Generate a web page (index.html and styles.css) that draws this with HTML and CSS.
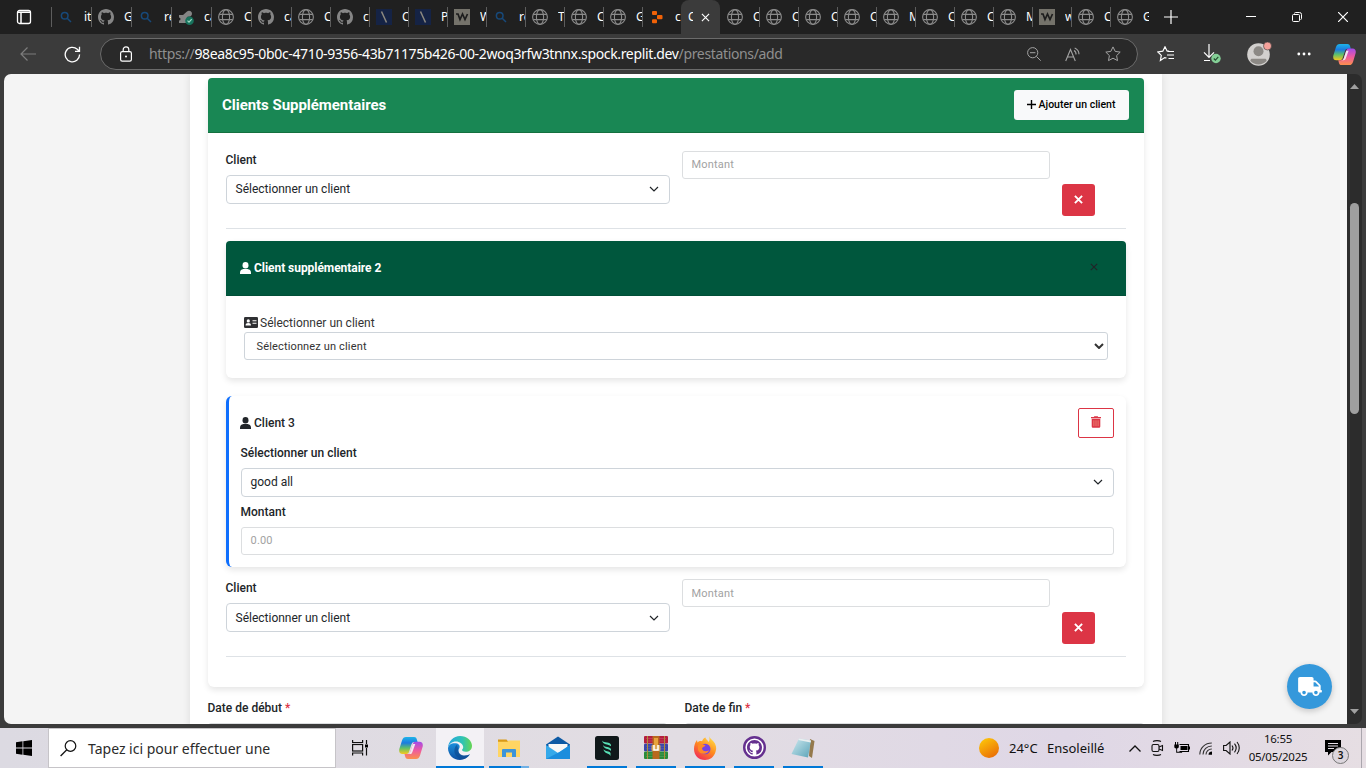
FILE: index.html
```html
<!DOCTYPE html>
<html lang="fr">
<head>
<meta charset="utf-8">
<title>Prestations</title>
<link rel="stylesheet" href="styles.css">
</head>
<body>
<svg class="defs" width="0" height="0">
  <defs>
    <linearGradient id="cpA" x1="0" y1="0" x2="0" y2="1"><stop offset="0" stop-color="#1db4e8"/><stop offset=".35" stop-color="#1c7be0"/><stop offset=".65" stop-color="#5ec06a"/><stop offset="1" stop-color="#f8c81c"/></linearGradient>
    <linearGradient id="cpB" x1="0" y1="0" x2="0" y2="1"><stop offset="0" stop-color="#a44be8"/><stop offset=".5" stop-color="#ee5aa0"/><stop offset="1" stop-color="#fb8f4c"/></linearGradient>
    <linearGradient id="edA" x1="0" y1="0" x2="1" y2="0"><stop offset="0" stop-color="#27a5e0"/><stop offset=".6" stop-color="#2fc3b4"/><stop offset="1" stop-color="#66d552"/></linearGradient>
    <linearGradient id="edB" x1="0" y1="0" x2="0" y2="1"><stop offset="0" stop-color="#1b8fdc"/><stop offset="1" stop-color="#0f4fa0"/></linearGradient>
    <linearGradient id="ffA" x1=".8" y1="0" x2=".2" y2="1"><stop offset="0" stop-color="#ffe14a"/><stop offset=".5" stop-color="#ff8a1e"/><stop offset="1" stop-color="#f0245c"/></linearGradient>
    <linearGradient id="sunG" x1=".2" y1="0" x2=".8" y2="1"><stop offset="0" stop-color="#fdc60a"/><stop offset="1" stop-color="#e96a06"/></linearGradient>
    <linearGradient id="npG" x1="0" y1="0" x2="1" y2="1"><stop offset="0" stop-color="#cfeaf0"/><stop offset="1" stop-color="#5aa3b8"/></linearGradient>
    <symbol id="globe" viewBox="0 0 16 16"><g fill="none" stroke="#8b8b8b" stroke-width="1.1"><circle cx="8" cy="8" r="7.4"/><ellipse cx="8" cy="8" rx="3.6" ry="7.4"/><path d="M1.2 5.4h13.6M1.2 10.6h13.6"/></g></symbol>
    <symbol id="gh" viewBox="0 0 16 16"><path fill="currentColor" d="M8 0C3.58 0 0 3.58 0 8c0 3.54 2.29 6.53 5.47 7.59.4.07.55-.17.55-.38 0-.19-.01-.82-.01-1.49-2.01.37-2.53-.49-2.69-.94-.09-.23-.48-.94-.82-1.13-.28-.15-.68-.52-.01-.53.63-.01 1.08.58 1.23.82.72 1.21 1.87.87 2.33.66.07-.52.28-.87.51-1.07-1.78-.2-3.64-.89-3.64-3.95 0-.87.31-1.59.82-2.15-.08-.2-.36-1.02.08-2.12 0 0 .67-.21 2.2.82.64-.18 1.32-.27 2-.27s1.36.09 2 .27c1.53-1.04 2.2-.82 2.2-.82.44 1.1.16 1.92.08 2.12.51.56.82 1.27.82 2.15 0 3.07-1.87 3.75-3.65 3.95.29.25.54.73.54 1.48 0 1.07-.01 1.93-.01 2.2 0 .21.15.46.55.38A8.01 8.01 0 0016 8c0-4.42-3.58-8-8-8z"/></symbol>
    <symbol id="lens" viewBox="0 0 16 16"><g fill="none" stroke="#17497a" stroke-width="1.5"><circle cx="6.700" cy="6.700" r="3.300"/><path d="M9.200 9.200L13 13"/></g></symbol>
    <symbol id="slash" viewBox="0 0 16 16"><rect width="16" height="16" fill="#152345"/><path d="M5.500 2.500L10.500 13.500" stroke="#8d8a80" stroke-width="1.500"/></symbol>
    <symbol id="wave" viewBox="0 0 16 16"><rect width="16" height="16" fill="#75736b"/><path d="M2 5h2l2 5.500L8.500 5l2.500 5.500L13.500 5" fill="none" stroke="#1d1d1d" stroke-width="1.700"/></symbol>
    <symbol id="check" viewBox="0 0 16 16"><path fill="#868686" d="M1 6h4l4-3.500a3 3 0 0 1 5 2.500 3 3 0 0 1-4 2.500l-1 1V14H1v-2.500a1.500 1.500 0 0 0 0-3z"/><circle cx="11.500" cy="11.700" r="4.300" fill="#17725c"/><path d="M9.500 11.700l1.500 1.500 2.700-3" fill="none" stroke="#9fd8c4" stroke-width="1.200"/></symbol>
    <symbol id="replit" viewBox="0 0 16 16"><g fill="#f26207"><rect x="3" y="2" width="5" height="4" rx="1"/><rect x="8" y="6" width="5.500" height="4.300" rx="1"/><rect x="3" y="10.300" width="5" height="4" rx="1"/></g></symbol>
    <symbol id="user" viewBox="0 0 11 12"><g fill="currentColor"><ellipse cx="5.500" cy="3.200" rx="3" ry="3.200"/><path d="M0 12v-1.400C0 8.500 1.500 7.300 3.300 7h4.400C9.500 7.300 11 8.500 11 10.600V12z"/></g></symbol>
    <symbol id="cross" viewBox="0 0 8 8"><path d="M.8.8l6.400 6.400M7.200.8L.8 7.200" stroke="currentColor" fill="none"/></symbol>
    <symbol id="chev" viewBox="0 0 10 6"><path d="M1 1l4 4 4-4" stroke="currentColor" fill="none"/></symbol>
    <symbol id="copilot" viewBox="0 0 24 22"><path fill="url(#cpA)" d="M7 0h8c2 0 2.500 1 3 3l.6 2h-3c-1.800 0-2.600.8-3.200 2.600L10 15c-.6 1.600-1.500 2-3 2H3.500C.8 17-.3 15 .3 12L3 3.500C3.800 1 5 0 7 0z"/><path fill="url(#cpB)" d="M17 22H9c-1.800 0-2.600-1-3-3l-.5-2h2.300c2 0 3-.8 3.600-2.600L13.800 7c.6-1.600 1.400-2.200 3-2.200h3.700c2.700 0 3.700 2 3.200 4.600L21 18.500c-.8 2.500-2 3.500-4 3.500z"/><path fill="#f3e6ef" d="M13.800 7h2.500l-3 8.200c-.5 1.300-1 1.800-2.200 1.800h-2c1.200-.4 1.800-1 2.300-2.600z"/></symbol>
  </defs>
</svg>

<div class="tabbar">
  <div class="workspace"><svg width="16" height="16" viewBox="0 0 16 16"><rect x="1.500" y="1.500" width="13" height="13" rx="2" fill="none" stroke="#fff" stroke-width="1.300"/><path d="M1.500 3.200h13M5 4v10.500" stroke="#fff" stroke-width="1.500"/></svg></div>
  <div class="tab wide"><svg><use href="#lens"/></svg><span>it</span></div>
  <div class="tab wide"><svg><use href="#gh"/></svg><span>G</span></div>
  <div class="tab wide"><svg><use href="#lens"/></svg><span>re</span></div>
  <div class="tab wide"><svg><use href="#check"/></svg><span>ca</span></div>
  <div class="tab wide"><svg><use href="#globe"/></svg><span>C</span></div>
  <div class="tab wide"><svg><use href="#gh"/></svg><span>ca</span></div>
  <div class="tab"><svg><use href="#globe"/></svg><span>C</span></div>
  <div class="tab"><svg><use href="#gh"/></svg><span>c</span></div>
  <div class="tab"><svg><use href="#slash"/></svg><span>C</span></div>
  <div class="tab"><svg><use href="#slash"/></svg><span>P</span></div>
  <div class="tab"><svg><use href="#wave"/></svg><span>W</span></div>
  <div class="tab"><svg><use href="#lens"/></svg><span>re</span></div>
  <div class="tab"><svg><use href="#globe"/></svg><span>T</span></div>
  <div class="tab"><svg><use href="#globe"/></svg><span>C</span></div>
  <div class="tab"><svg><use href="#globe"/></svg><span>G</span></div>
  <div class="tab"><svg><use href="#replit"/></svg><span>c</span></div>
  <div class="tab active"><span>C</span><svg class="close"><use href="#cross"/></svg></div>
  <div class="tab plain"><svg><use href="#globe"/></svg><span>C</span></div>
  <div class="tab"><svg><use href="#globe"/></svg><span>C</span></div>
  <div class="tab"><svg><use href="#globe"/></svg><span>C</span></div>
  <div class="tab"><svg><use href="#globe"/></svg><span>C</span></div>
  <div class="tab"><svg><use href="#globe"/></svg><span>M</span></div>
  <div class="tab"><svg><use href="#globe"/></svg><span>C</span></div>
  <div class="tab"><svg><use href="#globe"/></svg><span>C</span></div>
  <div class="tab"><svg><use href="#globe"/></svg><span>M</span></div>
  <div class="tab"><svg><use href="#wave"/></svg><span>w</span></div>
  <div class="tab"><svg><use href="#globe"/></svg><span>C</span></div>
  <div class="tab"><svg><use href="#globe"/></svg><span>G</span></div>
  <div class="newtab"><svg width="14" height="14" viewBox="0 0 14 14"><path d="M7 0v14M0 7h14" stroke="#fff" stroke-width="1.200"/></svg></div>
  <div class="winbtns">
    <svg width="10" height="10" viewBox="0 0 10 10"><path d="M0 4.500h10" stroke="#fff"/></svg>
    <svg width="10" height="10" viewBox="0 0 10 10"><g fill="none" stroke="#fff"><rect x=".5" y="2.500" width="7" height="7" rx="1"/><path d="M2.500 1.500a1 1 0 0 1 1-1h4a2 2 0 0 1 2 2v4a1 1 0 0 1-1 1"/></g></svg>
    <svg width="10" height="10" viewBox="0 0 10 10"><path d="M0 0l10 10M10 0L0 10" stroke="#fff" stroke-width="1.200"/></svg>
  </div>
</div>

<div class="toolbar">
  <svg class="back" width="16" height="14" viewBox="0 0 16 14"><path d="M16 7H1M7.500.5L1 7l6.500 6.500" fill="none" stroke="#7d7d7d" stroke-width="1.200"/></svg>
  <svg class="reload" width="17" height="17" viewBox="0 0 17 17"><path d="M15.600 8.500a7.200 7.200 0 1 1-2.300-5.200L15 5M15.500.8V5.300H11" fill="none" stroke="#fff" stroke-width="1.300"/></svg>
  <div class="address">
    <svg class="lock" width="12" height="16" viewBox="0 0 12 16"><g fill="none" stroke="#fff" stroke-width="1.200"><rect x=".6" y="5.600" width="10.800" height="9.600" rx="1.600"/><path d="M3.200 5.500V3.600a2.800 2.800 0 0 1 5.600 0v1.900"/></g><circle cx="6" cy="10.500" r="1" fill="#fff"/></svg>
    <div class="url"><span class="dim">https://</span><span class="host">98ea8c95-0b0c-4710-9356-43b71175b426-00-2woq3rfw3tnnx.spock.replit.dev</span><span class="dim">/prestations/add</span></div>
    <div class="addr-icons">
      <svg width="14" height="14" viewBox="0 0 14 14"><g fill="none" stroke="#a3a3a3"><circle cx="5.700" cy="5.700" r="5.100"/><path d="M3 5.700h5.400M9.400 9.400L13.700 13.700"/></g></svg>
      <svg width="16" height="15" viewBox="0 0 16 15"><g fill="none" stroke="#a3a3a3" stroke-width="1.100"><path d="M.7 14L5.500 2.500 10.300 14M2.400 10h6.200M9 3.500a4 4 0 0 1 2 4M9.700.9a7 7 0 0 1 4.300 6.300"/></g></svg>
      <svg width="16" height="16" viewBox="0 0 16 16"><path d="M8 .9l2.200 4.500 5 .7-3.600 3.500.9 5L8 12.200l-4.500 2.400.9-5L.8 6.100l5-.7z" fill="none" stroke="#a3a3a3" stroke-linejoin="round"/></svg>
    </div>
  </div>
  <div class="tools">
    <svg width="18" height="16" viewBox="0 0 18 16"><g fill="none" stroke="#fff" stroke-width="1.200"><path d="M9.500 12l-1.800-.4-4.300 2.800.9-5L.8 6l5-.8L8 .8l2.200 4.400h2"/><path d="M11 5.500h6M10 9h7M11.500 12.500H17"/></g></svg>
    <svg width="18" height="20" viewBox="0 0 18 20"><path d="M6 0v13M1 8.300l5 5 5-5M1 16.500h6" fill="none" stroke="#fff" stroke-width="1.200"/><circle cx="13" cy="14.500" r="4.700" fill="#84cf96"/><path d="M10.800 14.500l1.600 1.700 2.900-3.300" fill="none" stroke="#244a2e" stroke-width="1.100"/></svg>
    <svg width="25" height="24" viewBox="0 0 25 24"><circle cx="11.500" cy="12.500" r="11.300" fill="#d2d0ce"/><circle cx="11.500" cy="9.300" r="5" fill="#8c8985"/><path d="M4.500 16.800h14a2 2 0 0 1 1 2.300 11 11 0 0 1-16 0 2 2 0 0 1 1-2.300z" fill="#8c8985"/><circle cx="20.500" cy="4" r="4" fill="#f5a29b" stroke="#3b3b3b" stroke-width=".6"/></svg>
    <svg width="14" height="4" viewBox="0 0 14 4"><g fill="#fff"><circle cx="1.800" cy="2" r="1.400"/><circle cx="7" cy="2" r="1.400"/><circle cx="12.200" cy="2" r="1.400"/></g></svg>
    <svg width="23" height="21"><use href="#copilot"/></svg>
  </div>
</div>

<div class="frame">
  <div class="page">
    <div class="container">
      <section class="card main-card">
        <header class="card-head green">
          <h5>Clients Supplémentaires</h5>
          <button class="btn-add"><svg width="9" height="9" viewBox="0 0 9 9"><path d="M4.500 0v9M0 4.500h9" stroke="#000" stroke-width="1.400"/></svg>Ajouter un client</button>
        </header>
        <div class="card-body">
          <div class="row">
            <div class="col-client"><label>Client</label><div class="select">Sélectionner un client<svg><use href="#chev"/></svg></div></div>
            <div class="input col-amount">Montant</div>
            <button class="btn-x"><svg><use href="#cross"/></svg></button>
          </div>
          <section class="card sub">
            <header class="card-head dark"><h6><svg class="user"><use href="#user"/></svg>Client supplémentaire 2</h6><svg class="dismiss"><use href="#cross"/></svg></header>
            <div class="sub-body">
              <div class="idlabel"><svg width="14" height="11" viewBox="0 0 14 11"><rect width="14" height="11" rx="1.300" fill="#2f3033"/><circle cx="4.300" cy="3.900" r="1.600" fill="#fff"/><path d="M1.600 8.500c0-1.600 1-2.400 2.700-2.400S7 6.900 7 8.500zM8.500 3.200h4v1h-4zM8.500 5.800h4v1h-4z" fill="#fff"/></svg>Sélectionner un client</div>
              <div class="select native">Sélectionnez un client<svg><use href="#chev"/></svg></div>
            </div>
          </section>
          <section class="card client3">
            <div class="c3-head"><h6><svg class="user"><use href="#user"/></svg>Client 3</h6>
              <button class="btn-trash"><svg width="10" height="12" viewBox="0 0 10 12"><path fill="#dc3545" d="M3.300.3h3.400l.5.700H10v1.300H0V1h2.800z"/><path fill="#dc3545" d="M.7 2.800h8.600V10.500a1.200 1.200 0 0 1-1.200 1.200H1.900A1.200 1.200 0 0 1 .7 10.500z"/><path stroke="#f0a488" stroke-width=".7" d="M2.900 4.300v5.900M5 4.300v5.900M7.100 4.300v5.900"/></svg></button></div>
            <label>Sélectionner un client</label>
            <div class="select">good all<svg><use href="#chev"/></svg></div>
            <label class="second">Montant</label>
            <div class="input">0.00</div>
          </section>
          <div class="row last">
            <div class="col-client"><label>Client</label><div class="select">Sélectionner un client<svg><use href="#chev"/></svg></div></div>
            <div class="input col-amount">Montant</div>
            <button class="btn-x"><svg><use href="#cross"/></svg></button>
          </div>
        </div>
      </section>
      <div class="dates">
        <div><label>Date de début <i>*</i></label><div class="input"></div></div>
        <div><label>Date de fin <i>*</i></label><div class="input"></div></div>
      </div>
    </div>
    <div class="fab"><svg width="24" height="19" viewBox="0 0 640 512"><path fill="#fff" d="M624 352h-16V243.900c0-12.700-5.100-24.900-14.100-33.900L494 110.100c-9-9-21.200-14.100-33.900-14.100H416V48c0-26.500-21.500-48-48-48H48C21.500 0 0 21.500 0 48v320c0 26.500 21.500 48 48 48h16c0 53 43 96 96 96s96-43 96-96h128c0 53 43 96 96 96s96-43 96-96h48c8.800 0 16-7.200 16-16v-32c0-8.800-7.200-16-16-16zM160 464c-26.500 0-48-21.500-48-48s21.500-48 48-48 48 21.500 48 48-21.500 48-48 48zm320 0c-26.500 0-48-21.500-48-48s21.500-48 48-48 48 21.500 48 48-21.500 48-48 48zm80-208H416V144h44.100l99.900 99.900V256z"/></svg></div>
  </div>
  <div class="scrollbar">
    <svg width="9" height="5" viewBox="0 0 9 5"><path d="M0 5L4.500 0 9 5z" fill="#a0a0a0"/></svg>
    <div class="thumb"></div>
    <svg width="9" height="5" viewBox="0 0 9 5"><path d="M0 0l4.500 5L9 0z" fill="#a0a0a0"/></svg>
  </div>
</div>

<div class="taskbar">
  <div class="start"><svg width="16" height="16" viewBox="0 0 16 16"><path d="M0 2.200l6.500-.9v6.200H0zM7.300 1.200L16 0v7.500H7.300zM0 8.400h6.500v6.300L0 13.800zM7.300 8.400H16V16l-8.700-1.200z"/></svg></div>
  <div class="search"><svg width="17" height="17" viewBox="0 0 17 17"><circle cx="10.500" cy="6" r="5.300" fill="none" stroke="#111" stroke-width="1.200"/><path d="M6.800 9.800L.6 16" stroke="#111" stroke-width="1.300"/></svg>Tapez ici pour effectuer une</div>
  <div class="app first"><svg width="16" height="16" viewBox="0 0 16 16"><g fill="none" stroke="#111" stroke-width="1.200"><path d="M.6 0v2.500h10V0M.6 15.500V13h10v2.500"/><rect x=".6" y="4.500" width="10" height="6.500"/><path d="M14.500 0v4M14.500 8v7.500"/></g><rect x="13" y="4.500" width="3" height="3"/></svg></div>
  <div class="app"><svg width="24" height="22"><use href="#copilot"/></svg></div>
  <div class="app current open full"><svg width="24" height="24" viewBox="0 0 24 24"><path fill="url(#edB)" d="M0 12C1 7.500 5 6.800 8 7.300c3.500.6 4.500 3.200 3 5.500-1.500 2.800.5 7 5 7 2.500 0 4.700-.9 6-1.500C19.500 22 16 24 12 24 5 24 0 18.500 0 12z"/><path fill="url(#edA)" d="M0 12C.3 5 5.500 0 12 0c7 0 12 4.800 12 9.800 0 4-3 6-6.200 6-2.300 0-3.800-.9-3.800-1.700 0-.9 1.200-1 1.200-3C15.200 8 11.500 5.400 8 5.400 4 5.400.8 8 0 12z"/><path fill="#0e4b91" opacity=".65" d="M9 8.500c-4 3.500-4 12 4 14.800 3.500 0 7-2 9-5-6 3-12.500.5-12-5.500z"/></svg></div>
  <div class="app open split"><svg width="22" height="20" viewBox="0 0 22 20"><path d="M0 1.500h8.500L10.500 4H0z" fill="#d99a17"/><path d="M0 3.700h9.500l1-1.200H22V19H0z" fill="#ffd563"/><path d="M4 19v-7a1 1 0 0 1 1-1h12a1 1 0 0 1 1 1v7h-4v-4.500H8V19z" fill="#3d94d9"/></svg></div>
  <div class="app"><svg width="24" height="24" viewBox="0 0 24 24"><path d="M0 8.500L12 .5l12 8v3H0z" fill="#0c59a4"/><path d="M2.500 8h19v5L12 18 2.500 13z" fill="#f7f7f7"/><path d="M0 9l12 8 12-8v14H0z" fill="#35a9ea"/><path d="M0 23L14 15.800 24 9v14z" fill="#1b8ddd"/></svg></div>
  <div class="app open"><svg width="24" height="24" viewBox="0 0 24 24"><rect width="24" height="24" rx="2.500" fill="#10181a"/><g fill="#58dfb4"><path d="M7 4.500c2 3 8.500 1 9 4.500v1.300C13 7.500 8 9.500 7 4.500z"/><path d="M8 9c1.500 2.800 7 1.300 8 4.300v1.600C13.500 12 9 14 8 9z"/><path d="M8.500 13.300c1.500 2.500 6 1.300 7 3.700V20c-1-3-6.500-2-7-6.700z"/></g></svg></div>
  <div class="app open"><svg width="24" height="23" viewBox="0 0 24 23"><rect y="0" width="24" height="7.500" rx="1" fill="#b51e3f"/><rect y="7.700" width="24" height="7.500" rx="1" fill="#3b46a8"/><rect y="15.400" width="24" height="7.500" rx="1" fill="#2a8b3a"/><path d="M2 2.500h20M2 5h20M2 10.200h20M2 12.800h20M2 18h20M2 20.500h20" stroke="#fff" opacity=".12"/><path d="M3.500 0v23M20.500 0v23" stroke="#b08c38"/><rect x="8.500" width="7" height="23" fill="#b8691e"/><rect x="7.500" y="9" width="9" height="6" rx="1" fill="#d9a85a"/><path d="M10 2h4v8h-4z" fill="#e8a33d"/><path d="M10 9v5h4V9" fill="none" stroke="#fff" stroke-width="1.500"/></svg></div>
  <div class="app open"><svg width="24" height="24" viewBox="0 0 24 24"><path fill="url(#ffA)" d="M16 0c1 2.500 3 3.500 4.500 5.500C23 8.500 24 12 22.500 16 21 21 17 24 12 24 5.500 24 1 19.500 1 13c0-3.500 1-6.500 3-9l.5 2.500C6 5 7.500 4.700 9 5.200c1.300-2.300 1.500-3 3.500-3.700C12.500 3.700 15 4 15.500 6 17 4.500 16.500 2 16 0z"/><circle cx="12.300" cy="13" r="5.200" fill="#7542e5"/><path d="M5 9c3-2 5 0 7.500.3-.5 1.700-3 1.500-3.500 3 .2 3 4 4 7 2-1 4.500-9 5-11-.3z" fill="#ff8a28"/></svg></div>
  <div class="app open"><svg width="23" height="23" viewBox="0 0 23 23"><circle cx="11.500" cy="11.500" r="10.300" fill="#fff" stroke="#65308f" stroke-width="2.400"/><use href="#gh" class="cat" x="4" y="4" width="15" height="15"/></svg></div>
  <div class="app open"><svg width="24" height="22" viewBox="0 0 24 22"><path d="M19 2l4.500 2-2.500 17-3-2z" fill="#94794c"/><path d="M8 1.500L20 3.500l-3 17L.5 17z" fill="url(#npG)"/><path d="M8 1.500L20 3.500l-.3 2L7.300 3z" fill="#e9eef0"/></svg></div>
  <div class="weather"><svg width="20" height="20"><circle cx="10" cy="10" r="10" fill="url(#sunG)"/></svg><span class="temp">24°C</span><span class="sky">Ensoleillé</span></div>
  <div class="tray">
    <svg width="12" height="7" viewBox="0 0 12 7"><path d="M.5 6.500L6 1l5.500 5.500" fill="none" stroke="#111" stroke-width="1.300"/></svg>
    <svg width="13" height="16" viewBox="0 0 13 16"><g fill="none" stroke="#111" stroke-width="1.100"><rect x="1" y="4.500" width="7" height="7" rx="1.500"/><path d="M8 7l3.500-1.500v5L8 9M2 1.500C4 .3 8 .3 10 1.500M2 14.500c2 1.200 6 1.200 8 0"/></g></svg>
    <svg width="16" height="12" viewBox="0 0 16 12"><path d="M5.500 2.500h9v7h-9" fill="none" stroke="#000" stroke-width="1.100"/><path d="M6.500 4h7v4h-7zM15 4.500h1v3h-1zM.3 2.500h4.500v2.300c0 1.200-1 1.700-1.700 1.700v3.300h5v1H2.200V6.500C1 6.500.3 6 .3 4.800zM1 0h1v3H1zM3.200 0h1v3h-1z"/></svg>
    <svg width="14" height="13" viewBox="0 0 14 13"><g fill="none" stroke="#333" stroke-width="1.100"><path d="M.8 12.500C.8 6 6 1 12.800 1M4 12.500c0-4.800 4-8.500 8.800-8.500M7 12.500c0-3 2.500-5.500 5.800-5.500"/></g><path d="M9.500 12.700a3.500 3.500 0 0 1 3.500-3.200v3.200z"/></svg>
    <svg width="17" height="14" viewBox="0 0 17 14"><g fill="none" stroke="#111" stroke-width="1.100"><path d="M.6 4.500h2.500L7 1v12L3.100 9.500H.6z"/><path d="M9 4.500c1.200 1.500 1.200 3.500 0 5M11.500 2.700c2 2.500 2 6 0 8.600M14 1c3 3.500 3 8.500 0 12"/></g></svg>
  </div>
  <div class="clock"><span>16:55</span><span>05/05/2025</span></div>
  <div class="notif"><svg width="16" height="16" viewBox="0 0 16 16"><path d="M0 0h16v12H6.500L3 15.500V12H0z"/><path d="M3 3.500h10M3 6h10M3 8.500h6" stroke="#e6e0e7"/></svg><b>3</b></div>
</div>
</body>
</html>
```
FILE: styles.css
```css
* { box-sizing: border-box; }
body { margin: 0; width: 1366px; height: 768px; overflow: hidden; background: #3b3b3b; display: flex; flex-direction: column; font-family: "Noto Sans", "Open Sans", sans-serif; }
svg { display: block; flex: none; }
.defs { position: absolute; }
button { font: inherit; padding: 0; margin: 0; }

/* tab strip */
.tabbar { flex: none; height: 34px; background: #202020; display: flex; align-items: center; }
.workspace { width: 51px; padding-left: 16px; }
.tab { flex: none; width: 39px; height: 20px; border-left: 1px solid #5d5d5d; padding-left: 6px; display: flex; align-items: center; gap: 10px; overflow: hidden; color: #fff; font-size: 12px; }
.tab svg { width: 16px; height: 16px; color: #868686; }
.tab span { width: 6px; overflow: hidden; white-space: nowrap; line-height: 18px; flex: none; }
.tab.wide { width: 40px; }
.tab.wide span { width: 7px; }
.tab.plain { border-left-color: transparent; }
.tab.active { height: 34px; background: #3b3b3b; border: 0; border-radius: 8px 8px 0 0; padding-left: 7px; gap: 8px; }
.tab.active span { width: 5px; }
.tab.active .close { width: 9px; height: 9px; color: #fff; }
.newtab { padding-left: 15px; }
.winbtns { margin-left: auto; display: flex; gap: 36px; padding-right: 18px; }

/* toolbar */
.toolbar { flex: none; height: 40px; display: flex; align-items: center; }
.back { margin-left: 20px; }
.reload { margin-left: 28px; }
.address { margin-left: 19px; width: 1038px; height: 32px; border: 1px solid #6b6b6b; border-radius: 16px; background: #292929; display: flex; align-items: center; padding: 0 16px 0 19px; }
.url { margin-left: 17px; padding-bottom: 1px; font-size: 14px; letter-spacing: -.35px; white-space: nowrap; display: flex; }
.dim { color: #8f8f8f; }
.host { color: #fff; }
.addr-icons { margin-left: auto; display: flex; align-items: center; gap: 24px; }
.tools { display: flex; align-items: center; padding-left: 19px; width: 228px; justify-content: space-between; padding-right: 10px; }
.tools svg:nth-child(n+2):nth-child(-n+4) { margin-left: 3px; margin-right: -3px; }

/* browser viewport */
.frame { flex: none; height: 650px; margin: 0 4px 4px; border-radius: 7px; overflow: hidden; display: flex; position: relative; }
.page { width: 1343px; background: #f4f4f4; padding-left: 186px; overflow: hidden; font-family: Roboto, sans-serif; font-size: 12px; color: #212529; }
.container { width: 972px; height: 700px; background: #fff; padding: 4px 18px; box-shadow: 0 0 8px rgba(0,0,0,.1); }
.card { background: #fff; border-radius: 6px; box-shadow: 0 3px 6px rgba(0,0,0,.1); }
.main-card { height: 609px; }
.card-head { height: 55px; display: flex; align-items: center; justify-content: space-between; border-radius: 4px 4px 0 0; color: #fff; }
.green { background: #198754; border-bottom: 1px solid #14703f; padding: 0 15px 0 14px; }
h5, h6 { margin: 0; display: flex; align-items: center; }
h5 { font-size: 15px; font-weight: 700; letter-spacing: -.04px; }
h6 { font-size: 12px; font-weight: 500; gap: 3px; }
.user { width: 11px; height: 12px; }
.btn-add { width: 115px; height: 30px; border: 0; border-radius: 3px; background: #f8f9fa; color: #000; font-size: 10.500px; font-weight: 500; padding: 0 1px 1px 0; display: flex; align-items: center; justify-content: center; gap: 3px; }
.card-body { padding: 18px; }
label { display: block; height: 24px; line-height: 17px; padding-top: 1px; margin-left: -.5px; font-weight: 500; }
.row { height: 78px; border-bottom: 1px solid #dee2e6; display: flex; gap: 12px; align-items: flex-start; }
.col-client { width: 444px; }
.select { height: 29px; border: 1px solid #ced4da; border-radius: 4px; background: #fff; padding: 0 10px 1px 8.500px; display: flex; align-items: center; justify-content: space-between; }
.last .select { padding-bottom: 0; }
.select svg { width: 10px; height: 6px; stroke-width: 1.2; }
.input { height: 28px; border: 1px solid #dcdee0; border-radius: 3px; padding: 0 8.500px 1px; display: flex; align-items: center; color: #a2a2a2; font-size: 11px; letter-spacing: .2px; }
.last .input { padding-bottom: 0; }
.col-amount { width: 368px; }
.btn-x { width: 33px; height: 32px; margin-top: 33px; border: 0; border-radius: 3px; background: #dc3545; color: #fff; display: flex; align-items: center; justify-content: center; padding-bottom: 1px; }
.btn-x svg { width: 9px; height: 9px; stroke-width: 1.7; }
.sub { margin-top: 12px; height: 137px; }
.dark { background: #00573d; border-bottom: 1px solid #004f37; padding: 0 28px 0 14px; }
.dark h6 { font-weight: 700; letter-spacing: -.05px; }
.dismiss { width: 8px; height: 8px; margin-bottom: 2px; color: #212529; stroke-width: 1.2; }
.sub-body { padding: 18px; }
.idlabel { height: 18px; display: flex; align-items: center; gap: 2px; color: #333; }
.idlabel svg { margin-bottom: 1px; }
.native { height: 28px; font-size: 11px; letter-spacing: .15px; border-radius: 3px; padding: 0 3px 0 11.500px; color: #333; }
.native svg { stroke-width: 2; }
.client3 { margin-top: 18px; height: 171px; border-left: 3px solid #0d6efd; padding: 12px; }
.c3-head { height: 30px; display: flex; align-items: center; justify-content: space-between; margin-bottom: 6px; }
.c3-head h6 { margin-left: -1px; }
.btn-trash { width: 36px; height: 30px; border: 1px solid #dc3545; border-radius: 2px; background: #fff; display: flex; align-items: center; justify-content: center; padding-bottom: 2px; }
.second { margin-top: 6px; }
.client3 + .row { margin-top: 12px; }
.dates { display: grid; grid-template-columns: 459px 459px; gap: 18px; margin-top: 12px; }
i { color: #dc3545; font-style: normal; }
.fab { position: absolute; left: 1283px; top: 590px; width: 45px; height: 45px; border-radius: 50%; background: #3498db; box-shadow: 0 2px 6px rgba(0,0,0,.2); display: flex; align-items: center; justify-content: center; }
.scrollbar { width: 15px; background: #2c2c2c; display: flex; flex-direction: column; align-items: center; padding: 10px 0; }
.thumb { width: 9px; height: 211px; border-radius: 5px; background: #9f9f9f; margin-top: 114px; margin-bottom: auto; }

/* taskbar */
.taskbar { flex: none; height: 40px; display: flex; background: linear-gradient(90deg, #dcdae2, #e2dde3 50%, #dfd7e6 78%, #e6dee3); color: #111; }
.start { width: 48px; display: flex; align-items: center; justify-content: center; }
.search { width: 288px; border: 1px solid #c6c4c8; background: #fff; display: flex; align-items: center; padding-left: 11px; gap: 11px; font-size: 14px; color: #2b2b2b; white-space: nowrap; }
.app { width: 48px; margin-right: 1px; padding-top: 1px; display: flex; align-items: center; justify-content: center; border-bottom: 2px solid transparent; position: relative; }
.app.first { margin-right: 3px; }
.current { background: #f3f1f5; }
.open::after { content: ""; position: absolute; left: 4px; right: 4px; bottom: -2px; height: 2px; background: #0078d7; }
.full::after { left: 0; right: 0; }
.split::after { background: linear-gradient(90deg, #0078d7 32px, #70b0e5 32px); }
.cat { color: #65308f; }
.weather { display: flex; align-items: center; margin-left: auto; width: 150px; font-size: 13px; white-space: nowrap; }
.temp { margin-left: 10px; width: 38px; }
.tray { width: 111px; margin-right: 1px; display: flex; align-items: center; justify-content: space-between; }
.clock { width: 75px; display: flex; flex-direction: column; align-items: center; justify-content: center; font-size: 11.500px; letter-spacing: -.25px; line-height: 18px; padding: 0 1px 1px 0; }
.notif { width: 46px; position: relative; padding: 12px 0 0 9px; border-right: 1px solid #aaa6ad; margin-right: 4px; }
.notif b { position: absolute; left: 16px; top: 19px; width: 17px; height: 17px; border: 1px solid #777; border-radius: 50%; background: #dcd6dd; font-size: 10px; line-height: 15px; font-weight: 600; text-align: center; }
```
